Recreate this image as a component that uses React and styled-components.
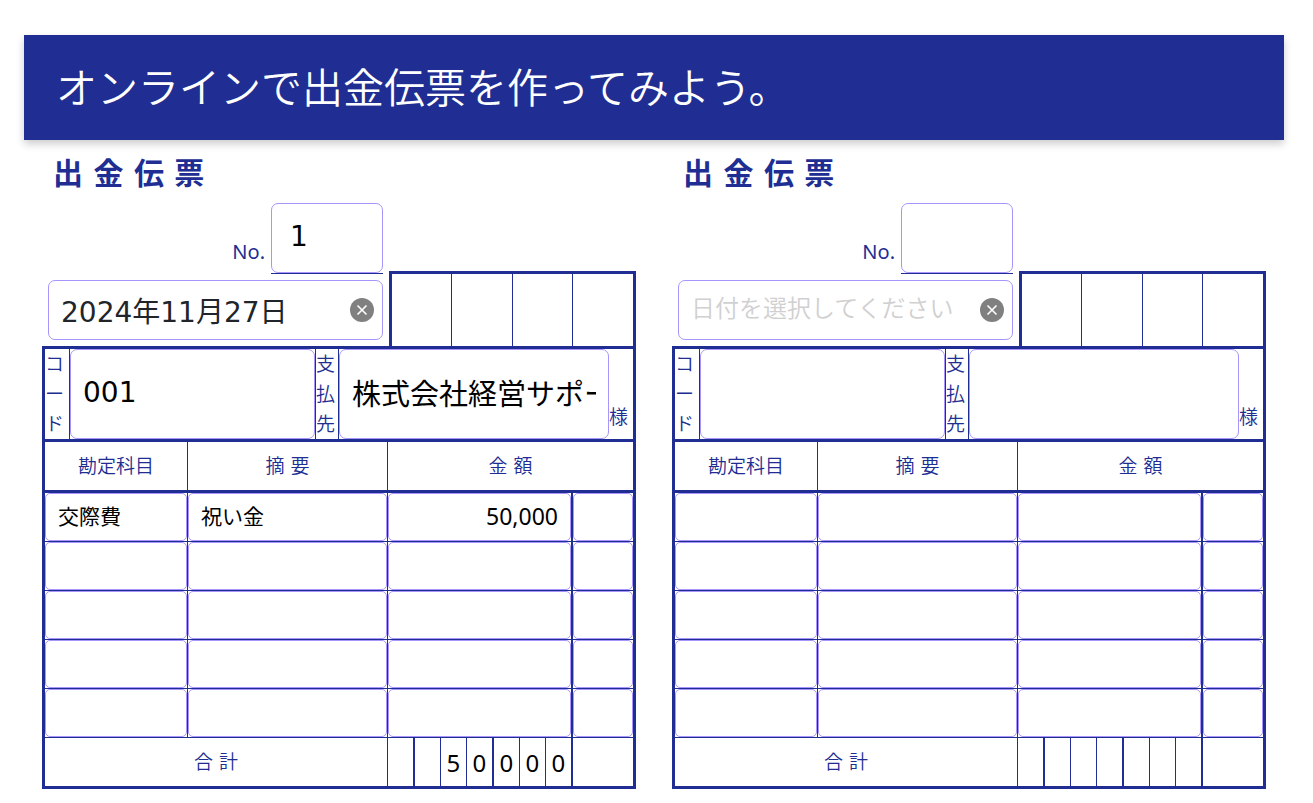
import React, { useState } from "react";
import styled, { createGlobalStyle } from "styled-components";

const navy = "#202e93";
const violet = "#a795fb";
const font = `"DejaVu Sans", "Noto Sans CJK JP", sans-serif`;
const figureFont = `"Noto Sans", "Noto Sans CJK JP", sans-serif`;

const GlobalStyle = createGlobalStyle`
  *, *::before, *::after {
    box-sizing: border-box;
  }
  body {
    margin: 0;
    background: #fff;
    color: ${navy};
    font-family: ${font};
    font-size: 19px;
  }
  input, button {
    font-family: ${font};
  }
`;

const Page = styled.main`
  padding: 35px 29px 14px 24px;
`;

const Banner = styled.header`
  padding: 18px 32px 23px;
  background: ${navy};
  box-shadow: 0 4px 8px rgba(0, 0, 0, 0.2);
`;

const BannerTitle = styled.h1`
  margin: 0;
  color: #fff;
  font-family: "Noto Sans CJK JP", sans-serif;
  font-size: 41px;
  font-weight: 350;
  line-height: 64px;
`;

const Slips = styled.div`
  display: grid;
  grid-template-columns: repeat(2, minmax(0, 1fr));
`;

const SlipForm = styled.form`
  min-width: 0;
  padding: 14px 18px 0;
`;

const SlipTitle = styled.h2`
  margin: 0 0 9px;
  padding-left: 11px;
  font-size: 30px;
  font-weight: 700;
  line-height: 40px;
`;

const Top = styled.div`
  display: grid;
  grid-template-columns: minmax(0, 1fr) 247px;
  gap: 6px;
`;

const TopFields = styled.div`
  display: flex;
  flex-direction: column;
  gap: 6px;
  padding: 0 0 6px 6px;
`;

const NumberField = styled.div`
  display: flex;
  justify-content: flex-end;
  align-items: flex-end;
  gap: 6px;
`;

const NumberLabel = styled.label`
  padding-bottom: 8px;
  font-family: ${figureFont};
  font-size: 20px;
  line-height: 28px;
`;

const NumberLine = styled.div`
  display: flex;
  width: 112px;
  border-bottom: 1px solid ${navy};
`;

const Field = styled.input`
  width: 100%;
  min-width: 0;
  height: ${(props) => props.$height}px;
  padding: 0 12px 4px;
  border: 1px solid ${violet};
  border-radius: 7px;
  outline: none;
  background: #fff;
  color: #000;
  font-size: ${(props) => props.$size || 28}px;
`;

const NumberInput = styled(Field)`
  padding: 0 18px 4px;
`;

const DateField = styled.div`
  display: flex;
  align-items: center;
  height: 60px;
  padding: 0 8px 0 12px;
  border: 1px solid ${violet};
  border-radius: 7px;
`;

const DateInput = styled.input`
  flex: 1;
  min-width: 0;
  height: 58px;
  padding: 0;
  border: 0;
  outline: none;
  background: transparent;
  color: #212529;
  font-size: 28px;

  &:placeholder-shown {
    padding-bottom: 2px;
    font-size: 24px;
    font-weight: 350;
  }
  &::placeholder {
    color: #d0d0d0;
  }
`;

const ClearButton = styled.button`
  display: flex;
  align-items: center;
  justify-content: center;
  width: 24px;
  height: 24px;
  padding: 0;
  border: 0;
  border-radius: 50%;
  background: #808080;
  color: #fff;
  cursor: pointer;
`;

const Stamps = styled.div`
  display: grid;
  grid-template-columns: repeat(4, 1fr);
  align-self: end;
  height: 75px;
  border: 3px solid ${navy};
  border-bottom: 0;
`;

const Stamp = styled.div`
  &:not(:last-child) {
    border-right: 1px solid ${navy};
  }
`;

const Sheet = styled.div`
  border: 3px solid ${navy};
`;

const Payee = styled.div`
  display: flex;
  height: 93px;
  border-bottom: 3px solid ${navy};
`;

const VerticalLabel = styled.label`
  flex: none;
  width: ${(props) => props.$width}px;
  height: 90px;
  border-right: 1px solid ${navy};
  font-weight: 350;
  line-height: 30px;
  word-break: break-all;
`;

const CodeCell = styled.div`
  flex: 1;
  min-width: 0;
  border-right: 1px solid ${navy};
`;

const PayeeCell = styled.div`
  display: flex;
  align-items: flex-end;
  width: 294px;
`;

const Honorific = styled.span`
  flex: none;
  width: 24px;
  padding-bottom: 7px;
  font-weight: 350;
  line-height: 30px;
`;

const Ledger = styled.table`
  width: 100%;
  table-layout: fixed;
  border-spacing: 0;
`;

const HeadCell = styled.th`
  height: 51px;
  padding: 0 0 4px;
  border-bottom: 3px solid ${navy};
  font-weight: 350;

  &:not(:last-child) {
    border-right: 1px solid ${navy};
  }
`;

const Cell = styled.td`
  height: 49px;
  padding: 0;
  border-right: ${(props) => props.$rule || 0}px solid ${navy};
  border-bottom: 1px solid ${navy};
`;

const CellInput = styled(Field)`
  display: block;
  border-radius: 5px;
`;

const AmountInput = styled(CellInput)`
  padding-bottom: 2px;
  font-family: ${figureFont};
  text-align: right;
`;

const TotalLabel = styled.th`
  height: 48px;
  padding: 0 0 4px;
  border-right: 1px solid ${navy};
  font-weight: 350;
`;

const TotalCell = styled.td`
  padding: 0;
  border-right: ${(props) => props.$rule || 0}px solid ${navy};
`;

const Digits = styled.div`
  display: flex;
`;

const Digit = styled.span`
  flex: 1;
  box-sizing: content-box;
  height: 48px;
  border-right: ${(props) => props.$rule}px solid ${navy};
  color: #000;
  font-family: ${figureFont};
  font-size: 24px;
  line-height: 50px;
  text-align: center;
`;

const ROWS = 5;
// thicker rules mark the thousands and millions
const DIGIT_RULES = [2, 1, 1, 2, 1, 1, 0];

const toNumber = (text) => Number(text.replace(/[^0-9]/g, "")) || 0;

const Slip = ({ id, data }) => {
  const [date, setDate] = useState(data.date);
  const [rows, setRows] = useState(
    Array.from(
      { length: ROWS },
      (_, i) => data.rows[i] || { account: "", summary: "", amount: "" }
    )
  );

  const update = (index, key) => (e) => {
    const { value } = e.target;
    setRows(rows.map((row, i) => (i === index ? { ...row, [key]: value } : row)));
  };

  const total = rows.reduce((sum, row) => sum + toNumber(row.amount), 0);
  const digits = (total ? String(total) : "").padStart(7, " ").slice(-7);

  return (
    <SlipForm>
      <SlipTitle>出 金 伝 票</SlipTitle>
      <Top>
        <TopFields>
          <NumberField>
            <NumberLabel htmlFor={`${id}-no`}>No.</NumberLabel>
            <NumberLine>
              <NumberInput id={`${id}-no`} $height={70} defaultValue={data.no} />
            </NumberLine>
          </NumberField>
          <DateField>
            <DateInput
              aria-label="日付"
              placeholder="日付を選択してください"
              value={date}
              onChange={(e) => setDate(e.target.value)}
            />
            <ClearButton
              type="button"
              aria-label="日付を消す"
              onClick={() => setDate("")}
            >
              <svg width="12" height="12" viewBox="0 0 12 12" fill="none">
                <path
                  d="M1.5 1.5 10.5 10.5M10.5 1.5 1.5 10.5"
                  stroke="currentColor"
                  strokeWidth="1.6"
                />
              </svg>
            </ClearButton>
          </DateField>
        </TopFields>
        <Stamps>
          <Stamp />
          <Stamp />
          <Stamp />
          <Stamp />
        </Stamps>
      </Top>
      <Sheet>
        <Payee>
          <VerticalLabel htmlFor={`${id}-code`} $width={25}>
            コード
          </VerticalLabel>
          <CodeCell>
            <Field id={`${id}-code`} $height={90} defaultValue={data.code} />
          </CodeCell>
          <VerticalLabel htmlFor={`${id}-payee`} $width={23}>
            支払先
          </VerticalLabel>
          <PayeeCell>
            <Field
              id={`${id}-payee`}
              $height={90}
              $size={29}
              defaultValue={data.payee}
            />
            <Honorific>様</Honorific>
          </PayeeCell>
        </Payee>
        <Ledger>
          <colgroup>
            <col style={{ width: 143 }} />
            <col />
            <col style={{ width: 185 }} />
            <col style={{ width: 60 }} />
          </colgroup>
          <thead>
            <tr>
              <HeadCell scope="col">勘定科目</HeadCell>
              <HeadCell scope="col">摘 要</HeadCell>
              <HeadCell scope="col" colSpan={2}>
                金 額
              </HeadCell>
            </tr>
          </thead>
          <tbody>
            {rows.map((row, index) => (
              <tr key={`${id}-row-${index}`}>
                <Cell $rule={1}>
                  <CellInput
                    aria-label="勘定科目"
                    $height={48}
                    $size={21}
                    value={row.account}
                    onChange={update(index, "account")}
                  />
                </Cell>
                <Cell $rule={1}>
                  <CellInput
                    aria-label="摘要"
                    $height={48}
                    $size={21}
                    value={row.summary}
                    onChange={update(index, "summary")}
                  />
                </Cell>
                <Cell $rule={2}>
                  <AmountInput
                    aria-label="金額"
                    $height={48}
                    $size={23}
                    value={row.amount}
                    onChange={update(index, "amount")}
                  />
                </Cell>
                <Cell>
                  <CellInput aria-label="備考" $height={48} $size={21} />
                </Cell>
              </tr>
            ))}
          </tbody>
          <tfoot>
            <tr>
              <TotalLabel scope="row" colSpan={2}>
                合 計
              </TotalLabel>
              <TotalCell $rule={2}>
                <Digits>
                  {digits.split("").map((digit, index) => (
                    <Digit key={`${id}-digit-${index}`} $rule={DIGIT_RULES[index]}>
                      {digit}
                    </Digit>
                  ))}
                </Digits>
              </TotalCell>
              <TotalCell />
            </tr>
          </tfoot>
        </Ledger>
      </Sheet>
    </SlipForm>
  );
};

const slips = [
  {
    no: "1",
    date: "2024年11月27日",
    code: "001",
    payee: "株式会社経営サポート",
    rows: [{ account: "交際費", summary: "祝い金", amount: "50,000" }],
  },
  { no: "", date: "", code: "", payee: "", rows: [] },
];

const App = () => (
  <>
    <GlobalStyle />
    <Page>
      <Banner>
        <BannerTitle>オンラインで出金伝票を作ってみよう。</BannerTitle>
      </Banner>
      <Slips>
        {slips.map((slip, index) => (
          <Slip key={`slip-${index}`} id={`slip-${index}`} data={slip} />
        ))}
      </Slips>
    </Page>
  </>
);

export default App;
